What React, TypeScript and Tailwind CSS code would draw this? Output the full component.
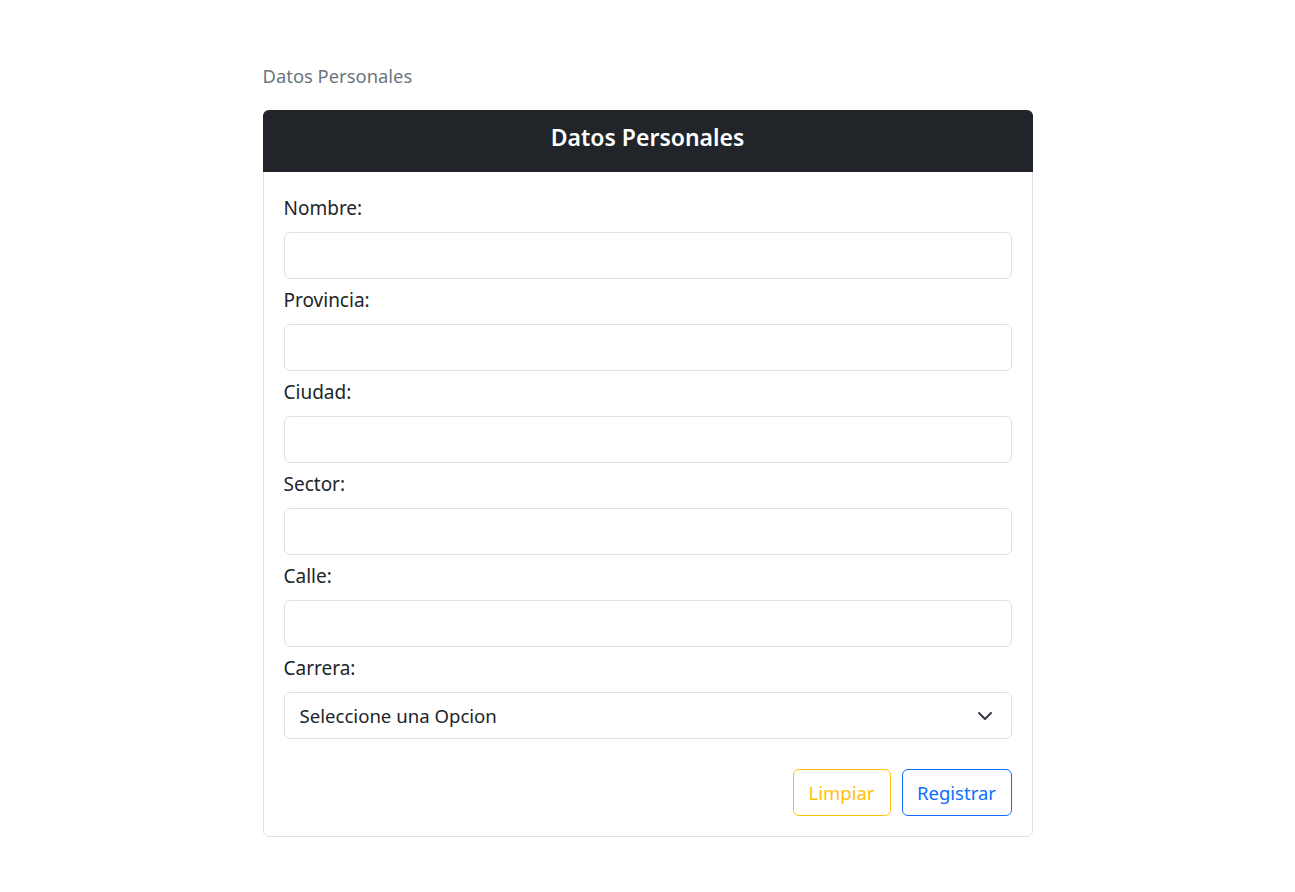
import React from "react";

const fields = ["Nombre:", "Provincia:", "Ciudad:", "Sector:", "Calle:"];

export default function App() {
  return (
    <div
      className="min-h-screen bg-white pt-[62px] text-[#212529]"
      style={{ fontFamily: '"Noto Sans", "Open Sans", sans-serif' }}
    >
      <div className="mx-auto w-[770px]">
        <p className="text-[18.4px] leading-[28px] text-[#6c757d]">Datos Personales</p>
        <div className="mt-[20px] rounded-[6px] border border-[#dee2e6]">
          <div className="-mx-px -mt-px flex h-[62px] items-center justify-center rounded-t-[6px] bg-[#212529] pb-[8px]">
            <h3 className="text-[23px] font-semibold text-white">Datos Personales</h3>
          </div>
          <div className="px-[20px] pb-[20px] pt-[24px]">
            <div className="flex flex-col gap-[9px]">
              {fields.map((f) => (
                <div key={f} className="flex flex-col">
                  <label className="mb-[12px] text-[19px] leading-[24px]">{f}</label>
                  <input className="h-[47px] w-full rounded-[6px] border border-[#dee2e6] px-[15px] text-[18px] outline-none" />
                </div>
              ))}
              <div className="flex flex-col">
                <label className="mb-[12px] text-[19px] leading-[24px]">Carrera:</label>
                <div className="flex h-[47px] w-full items-center justify-between rounded-[6px] border border-[#dee2e6] pl-[15px] pr-[18px]">
                  <span className="text-[18.6px]">Seleccione una Opcion</span>
                  <svg width="16" height="16" viewBox="0 0 16 16" fill="none">
                    <path d="M2 5l6 6 6-6" stroke="#343a40" strokeWidth="2" strokeLinecap="round" strokeLinejoin="round" />
                  </svg>
                </div>
              </div>
            </div>
            <div className="mt-[30px] flex justify-end gap-[11px]">
              <button className="h-[47px] w-[98px] rounded-[6px] border border-[#ffc107] text-[18.5px] text-[#ffc107]">
                Limpiar
              </button>
              <button className="h-[47px] w-[110px] rounded-[6px] border border-[#0d6efd] text-[18.5px] text-[#0d6efd]">
                Registrar
              </button>
            </div>
          </div>
        </div>
      </div>
    </div>
  );
}
